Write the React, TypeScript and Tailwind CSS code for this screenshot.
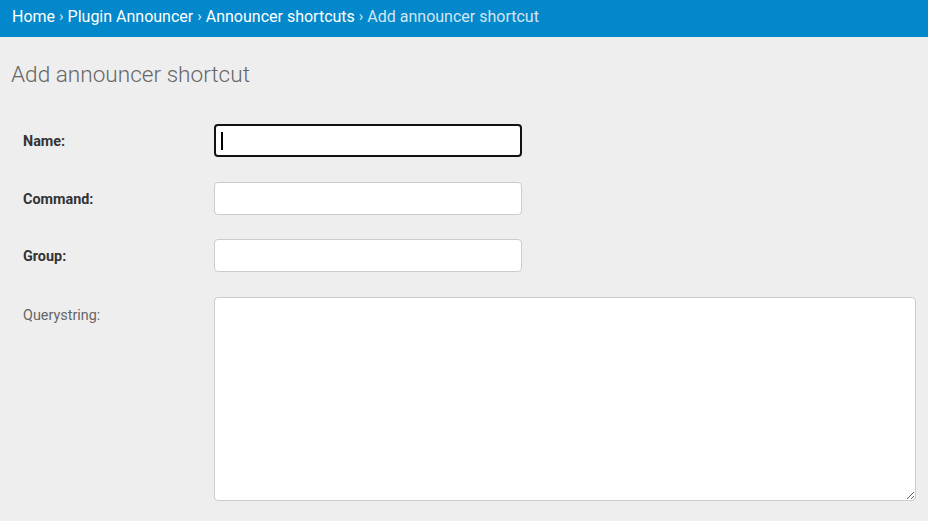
const crumbs = ["Home", "Plugin Announcer", "Announcer shortcuts"]

const fields = [
  { label: "Name", focused: true },
  { label: "Command", focused: false },
  { label: "Group", focused: false },
]

export default function App() {
  return (
    <div className="min-h-screen bg-[#eeeeee] font-['Roboto',sans-serif]">
      {/* breadcrumbs */}
      <div className="flex h-[37px] items-center bg-[#0388cb] px-3 pb-[4px] text-[16px] text-white">
        {crumbs.map((c) => (
          <span key={c} className="flex items-center">
            <a className="cursor-pointer">{c}</a>
            <span className="mx-[4px] text-[15px] text-[#d6e9f4]">›</span>
          </span>
        ))}
        <span className="text-[#d2e6f2]">Add announcer shortcut</span>
      </div>

      <div className="px-[11px] pr-3 pt-[24px]">
        <h1 className="text-[22.6px] leading-[28px] font-light text-[#666]">Add announcer shortcut</h1>

        <form className="mt-[35px] flex flex-col gap-[24.5px] pl-3">
          {fields.map((f) => (
            <div key={f.label} className="flex items-center">
              <label className="w-[191px] pt-[3px] text-[14.4px] font-bold text-[#333]">{f.label}:</label>
              <div className="relative">
                <input
                  type="text"
                  readOnly
                  className={`h-[33px] w-[308px] rounded-[4px] bg-white px-2 outline-none ${
                    f.focused ? "border-2 border-[#111]" : "border border-[#cccccc]"
                  }`}
                />
                {f.focused && (
                  <span className="absolute left-[7px] top-[8px] h-[18px] w-[2px] bg-black" />
                )}
              </div>
            </div>
          ))}
          <div className="flex items-start">
            <label className="w-[191px] pt-[8px] text-[14.4px] text-[#666]">Querystring:</label>
            <textarea
              readOnly
              className="h-[204px] flex-1 rounded-[4px] border border-[#cccccc] bg-white p-2 outline-none"
            />
          </div>
        </form>
      </div>
    </div>
  )
}
